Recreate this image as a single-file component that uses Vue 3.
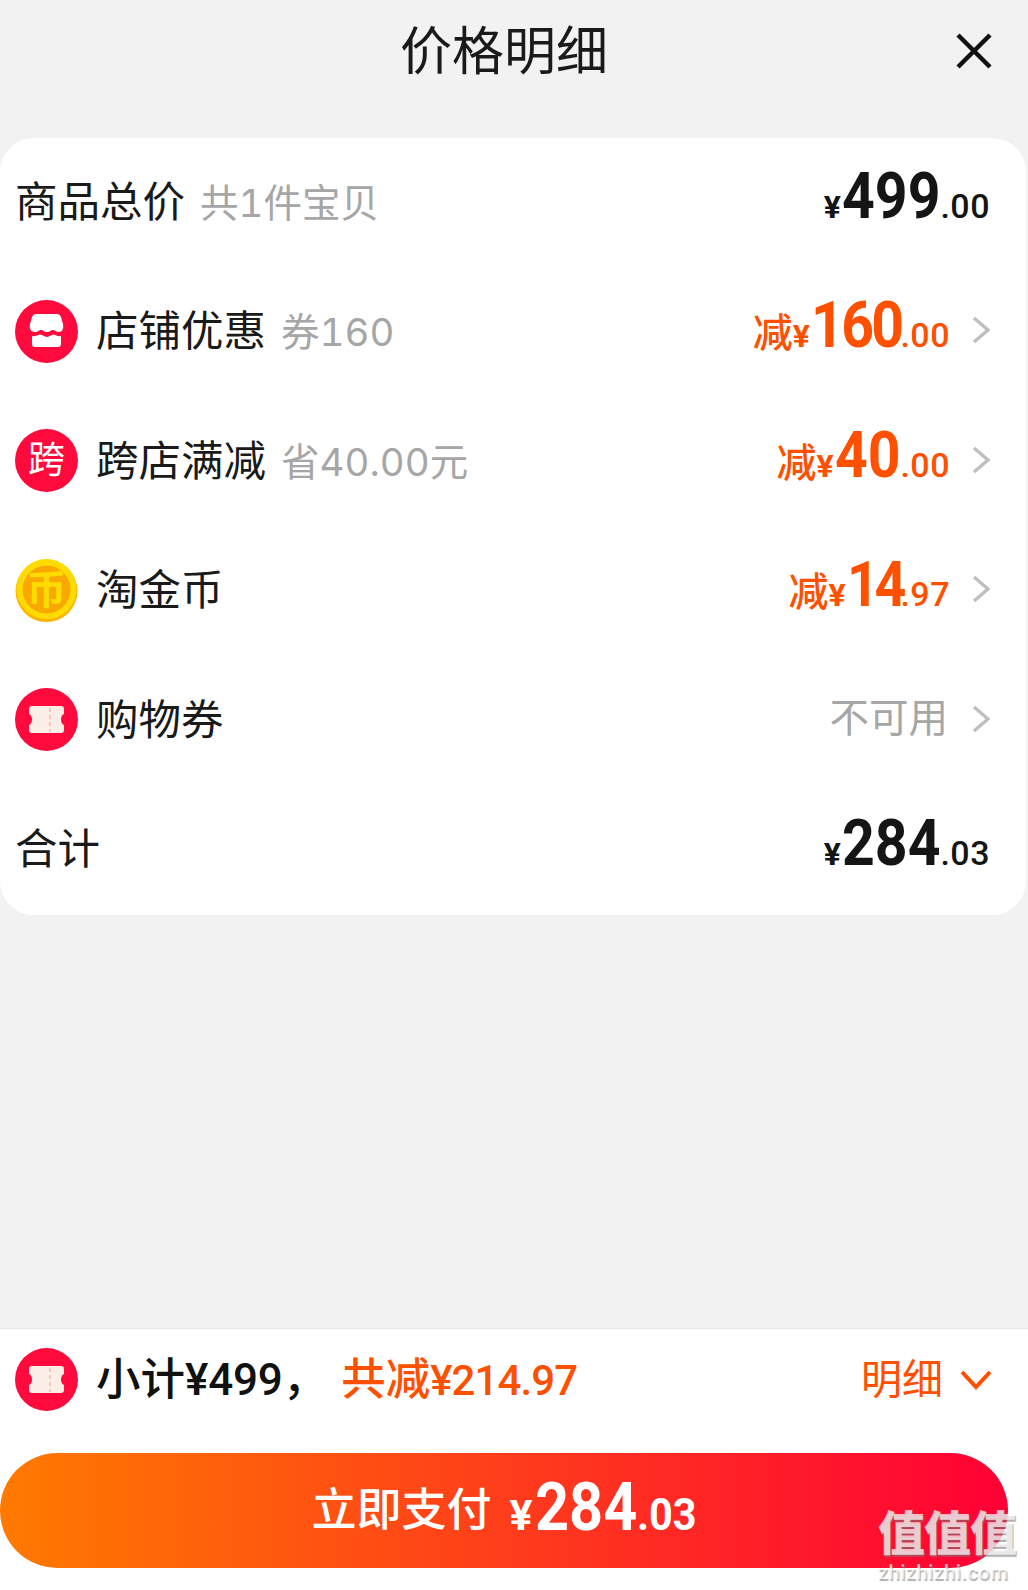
<template>
  <div class="page">
    <header class="header">
      <h1>价格明细</h1>
      <svg class="close" viewBox="0 0 36 36" aria-label="关闭">
        <path d="M2 2 L34 34 M34 2 L2 34" />
      </svg>
    </header>

    <section class="card">
      <div v-for="row in rows" :key="row.label" class="row">
        <svg v-if="row.icon === 'store'" class="icon" viewBox="0 0 63 63">
          <circle cx="31.5" cy="31.5" r="31.5" fill="#ff0a3c" />
          <path d="M21 14 H42 C44 14 45 15 46 17 L48 24 C49 29 47 32 44 32 C41 32 40 30 38 30 C36 30 35 32 32 32 C29 32 28 30 26 30 C24 30 23 32 20 32 C16 32 14 29 15 24 L17 17 C18 15 19 14 21 14 Z" fill="#fff" />
          <path d="M17 36 C20 37 22 35 25 34.500 C28 34.500 29 37 32 37 C35 37 36 34.500 38.500 34.500 C41 35 43 37 46 36 V44 C46 46 45 47 43 47 H20 C18 47 17 46 17 44 Z" fill="#fff" />
        </svg>
        <span v-else-if="row.icon === 'cross'" class="icon cross">跨</span>
        <svg v-else-if="row.icon === 'coin'" class="icon" viewBox="0 0 63 63">
          <circle cx="31.5" cy="32" r="31" fill="#ffb400" />
          <circle cx="31.5" cy="30" r="30" fill="#ffdc00" />
          <circle cx="31.5" cy="30.5" r="24" fill="#f9a800" />
          <text x="31.500" y="45" text-anchor="middle" class="coin-glyph">币</text>
        </svg>
        <svg v-else-if="row.icon === 'ticket'" class="icon" viewBox="0 0 63 63">
          <circle cx="31.5" cy="31.5" r="31.5" fill="#ff0a3c" />
          <path d="M17 18 H46 C48 18 49 19 49 21 V26 C45 27 45 36 49 37 V42 C49 44 48 45 46 45 H17 C15 45 14 44 14 42 V37 C18 36 18 27 14 26 V21 C14 19 15 18 17 18 Z" fill="#fbeee6" />
          <path d="M35 20 V44" stroke="#f6b9b0" stroke-width="1.500" stroke-dasharray="4 3" />
        </svg>

        <span class="label">{{ row.label }}</span>
        <span v-if="row.note" class="note">{{ row.note }}</span>

        <span class="right" :class="{ orange: row.orange }">
          <span v-if="row.unavailable" class="unavailable">不可用</span>
          <span v-else class="price" :class="{ plain: !row.arrow }">
            <span v-if="row.orange" class="cut">减</span><span class="yen">¥</span><span class="int" :class="{ small: row.small, tight: row.tight }" :style="squeeze(row.int)">{{ row.int }}</span><span class="dec">.{{ row.dec }}</span>
          </span>
          <svg v-if="row.arrow" class="chevron" viewBox="0 0 18 28">
            <path d="M2 2 L16 14 L2 26" />
          </svg>
        </span>
      </div>
    </section>

    <div class="spacer"></div>

    <footer class="footer">
      <div class="summary">
        <svg class="icon" viewBox="0 0 63 63">
          <circle cx="31.5" cy="31.5" r="31.5" fill="#ff0a3c" />
          <path d="M17 18 H46 C48 18 49 19 49 21 V26 C45 27 45 36 49 37 V42 C49 44 48 45 46 45 H17 C15 45 14 44 14 42 V37 C18 36 18 27 14 26 V21 C14 19 15 18 17 18 Z" fill="#fbeee6" />
          <path d="M35 20 V44" stroke="#f6b9b0" stroke-width="1.500" stroke-dasharray="4 3" />
        </svg>
        <span class="subtotal">小计<span class="sum-num">¥499</span>，</span>
        <span class="saved">共减<span class="sum-num">¥214.97</span></span>
        <span class="detail">明细</span>
        <svg class="chevron-down" viewBox="0 0 32 20">
          <path d="M2 2 L16 17 L30 2" />
        </svg>
      </div>
      <button class="pay">
        <span class="pay-label">立即支付</span>
        <span class="pay-yen">¥</span><span class="pay-int">284</span><span class="pay-dec">.03</span>
      </button>
    </footer>

    <div class="watermark">
      <div class="wm-cn">值值值</div>
      <div class="wm-en">zhizhizhi.com</div>
    </div>
  </div>
</template>

<script setup>
const rows = [
  { label: '商品总价', note: '共1件宝贝', int: '499', dec: '00' },
  { label: '店铺优惠', note: '券160', icon: 'store', int: '160', dec: '00', orange: true, arrow: true, tight: true },
  { label: '跨店满减', note: '省40.00元', icon: 'cross', int: '40', dec: '00', orange: true, arrow: true },
  { label: '淘金币', icon: 'coin', int: '14', dec: '97', orange: true, arrow: true, small: true },
  { label: '购物券', icon: 'ticket', unavailable: true, arrow: true },
  { label: '合计', int: '284', dec: '03' }
]

// the digits are squeezed with scaleX, so give the saved width back to the row
const squeeze = (digits) => ({ marginRight: `${-0.12 * digits.length}ch` })
</script>

<style>
html,
body {
  margin: 0;
  background: #f2f2f2;
}
</style>

<style scoped>
.page {
  position: relative;
  display: flex;
  flex-direction: column;
  height: 1590px;
  overflow: hidden;
  background: #f2f2f2;
  color: #111;
  font-family: Roboto, "Noto Sans CJK SC", sans-serif;
}

.header {
  display: flex;
  align-items: center;
  justify-content: center;
  height: 138px;
  padding-bottom: 32px;
  box-sizing: border-box;
  position: relative;
}

.header h1 {
  margin: 0 20px 0 0;
  font-size: 52px;
  font-weight: 400;
  line-height: 1;
  color: #1a1a1a;
}

.close {
  position: absolute;
  left: 956px;
  top: 33px;
  width: 36px;
  height: 36px;
  fill: none;
  stroke: #111;
  stroke-width: 4.500;
}

.card {
  display: grid;
  grid-auto-rows: 129.5px;
  margin-right: 2px;
  background: #fff;
  border-radius: 34px;
}

.row {
  display: flex;
  align-items: center;
  padding: 0 38px 0 15px;
}

.icon {
  flex: none;
  width: 63px;
  height: 63px;
  margin: -2px 18px 0 0;
}

.cross {
  display: flex;
  align-items: center;
  justify-content: center;
  border-radius: 50%;
  background: #ff0a3c;
  color: #fff;
  font-size: 37px;
  line-height: 1;
}

.coin-glyph {
  font-family: "Noto Sans CJK SC", sans-serif;
  font-size: 40px;
  font-weight: 700;
  fill: #ffdc00;
}

.label {
  font-size: 42.500px;
  line-height: 1;
  color: #1a1a1a;
}

.note {
  margin-left: 15px;
  font-family: Inter, "Noto Sans CJK SC", sans-serif;
  font-size: 38.500px;
  font-variant-numeric: tabular-nums;
  line-height: 1;
  color: #a6a6a6;
}

.right {
  display: flex;
  align-items: center;
  margin-left: auto;
  margin-top: -4px;
}

.price {
  display: flex;
  align-items: baseline;
  padding-bottom: 9px;
  font-weight: 700;
  color: #151515;
}

.price.plain {
  margin-right: -2px;
}

.orange .price {
  color: #ff5000;
}

.cut {
  font-size: 40px;
  font-weight: 500;
  line-height: 1;
}

.yen {
  font-size: 32px;
  line-height: 1;
  margin-right: 1px;
}

.int {
  display: inline-block;
  font-size: 65px;
  line-height: 1;
  transform: scaleX(0.88);
  transform-origin: left center;
}

.int.tight {
  letter-spacing: -3px;
}

.int.small {
  font-size: 63px;
  letter-spacing: -5px;
}

.dec {
  font-size: 34px;
  font-weight: 500;
  letter-spacing: 0.5px;
  line-height: 1;
}

.unavailable {
  margin-right: 2px;
  font-size: 39.500px;
  line-height: 1;
  color: #a6a6a6;
}

.chevron {
  width: 18px;
  height: 28px;
  margin-left: 22px;
  margin-right: -2px;
  fill: none;
  stroke: #bfbfbf;
  stroke-width: 3.500;
}

.spacer {
  flex: 1;
}

.footer {
  display: flex;
  flex-direction: column;
  height: 262px;
  box-sizing: border-box;
  border-top: 1px solid #e6e6e6;
  background: #fff;
}

.summary {
  display: flex;
  align-items: center;
  height: 124px;
  padding: 0 38px 22px 15px;
  box-sizing: border-box;
}

.subtotal {
  font-size: 44.500px;
  font-weight: 500;
  line-height: 1;
  white-space: nowrap;
}

.sum-num {
  font-size: 44px;
  letter-spacing: -0.2px;
}

.saved {
  margin-left: 14px;
  font-size: 44.500px;
  font-weight: 500;
  line-height: 1;
  color: #ff5000;
}

.saved .sum-num {
  font-size: 42px;
  letter-spacing: -0.9px;
}

.detail {
  margin-left: auto;
  font-size: 41px;
  line-height: 1;
  color: #ff5000;
}

.chevron-down {
  width: 32px;
  height: 20px;
  margin-left: 17px;
  margin-right: -2px;
  fill: none;
  stroke: #ff5000;
  stroke-width: 4;
}

.pay {
  display: flex;
  align-items: baseline;
  justify-content: center;
  width: 1008px;
  height: 115px;
  padding: 22px 0 0 0;
  box-sizing: border-box;
  border: 0;
  border-radius: 58px;
  background: linear-gradient(90deg, #ff7a00, #ff0036);
  color: #fff;
  font-family: inherit;
}

.pay-label {
  align-self: flex-start;
  margin-top: 13px;
  margin-right: 18px;
  font-size: 45px;
  font-weight: 500;
  line-height: 1;
}

.pay-yen {
  font-size: 43px;
  font-weight: 700;
  line-height: 1;
  margin-right: 2px;
}

.pay-int {
  display: inline-block;
  margin-right: -0.3ch;
  font-size: 66px;
  font-weight: 700;
  line-height: 1;
  transform: scaleX(0.9);
  transform-origin: left center;
}

.pay-dec {
  display: inline-block;
  margin-right: -0.2ch;
  font-size: 45px;
  font-weight: 700;
  line-height: 1;
  transform: scaleX(0.92);
  transform-origin: left center;
}

.watermark {
  position: absolute;
  left: 878px;
  top: 1508px;
  color: rgba(255, 255, 255, 0.72);
  text-shadow: 1px 2px 1px rgba(120, 120, 120, 0.6);
  pointer-events: none;
}

.wm-cn {
  font-size: 47px;
  font-weight: 900;
  line-height: 52px;
  letter-spacing: -1px;
}

.wm-en {
  font-size: 20px;
  font-weight: 500;
  line-height: 24px;
  letter-spacing: 0.5px;
}
</style>
